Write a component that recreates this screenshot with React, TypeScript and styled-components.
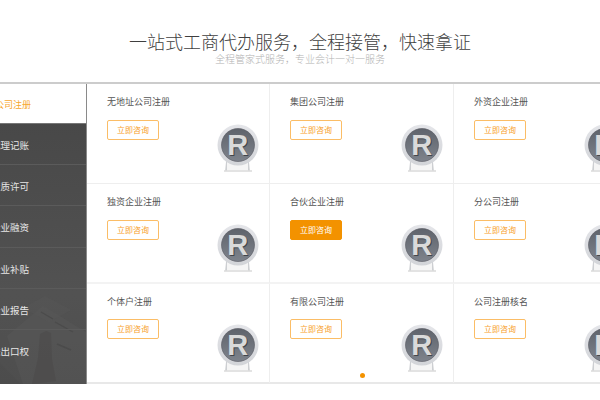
import { createGlobalStyle } from "styled-components";
import styled from "styled-components";

const GlobalStyle = createGlobalStyle`
    html, body {
        margin: 0;
        padding: 0;
        background: #ffffff;
    }
    body {
        font-family: "Noto Sans CJK SC", "Liberation Sans", sans-serif;
    }
`;

const Page = styled.div`
    width: 600px;
    height: 400px;
    overflow: hidden;
    background: #ffffff;
`;

const Intro = styled.div`
    height: 83px;
    padding-top: 31px;
    box-sizing: border-box;
    text-align: center;
    border-bottom: 1px solid #cccccc;
`;

const Title = styled.h2`
    margin: 0;
    font-size: 18px;
    line-height: 20px;
    font-weight: 300;
    color: #3f3f3f;
`;

const Subtitle = styled.p`
    margin: 2px 0 0;
    font-size: 10px;
    line-height: 12px;
    font-weight: 300;
    color: #b2b2b2;
`;

const Panel = styled.div`
    display: flex;
    width: 650px;
    height: 301px;
    margin-left: -7px;
    border-top: 1px solid #cccccc;
    box-sizing: border-box;
`;

const Sidebar = styled.ul`
    position: relative;
    flex: none;
    width: 94px;
    height: 300px;
    margin: 0;
    padding: 0;
    list-style: none;
    background: linear-gradient(#464646, #525252 70%, #4e4e4e);
    border-right: 1px solid #8a8a8a;
    box-sizing: border-box;
    overflow: hidden;
`;

const SideItem = styled.li<{ $active?: boolean }>`
    position: relative;
    height: ${(p) => (p.$active ? "40px" : "41.2px")};
    line-height: ${(p) => (p.$active ? "41px" : "43px")};
    font-size: ${(p) => (p.$active ? "9px" : "9.5px")};
    white-space: nowrap;
    box-sizing: border-box;
    text-indent: ${(p) => (p.$active ? "2px" : "-2px")};
    color: ${(p) => (p.$active ? "#f7a72e" : "#e6e6e6")};
    background: ${(p) => (p.$active ? "#ffffff" : "transparent")};
    border-bottom: 1px solid ${(p) => (p.$active ? "#777777" : "#5b5b5b")};
    &:last-of-type {
        border-bottom: 0;
    }
`;

const SidePhoto = styled.svg`
    position: absolute;
    left: 0;
    bottom: 0;
    width: 93px;
    height: 100px;
`;

const Grid = styled.div`
    position: relative;
    flex: none;
    width: 550px;
    display: grid;
    grid-template-columns: 183px 184px 183px;
    grid-template-rows: 100px 100px 99px;
    border-bottom: 2px solid #e8e8e8;
    box-sizing: border-box;
`;

const CellName = styled.div`
    font-size: 9px;
    line-height: 16px;
    color: #555555;
`;

const Consult = styled.button<{ $filled?: boolean }>`
    display: block;
    width: 52px;
    height: 20px;
    margin-top: 10px;
    padding: 0;
    font-family: inherit;
    font-size: 8px;
    line-height: 18px;
    border-radius: 2px;
    border: 1px solid ${(p) => (p.$filled ? "#f39200" : "#fbbd66")};
    color: ${(p) => (p.$filled ? "#ffffff" : "#f7a02c")};
    background: ${(p) => (p.$filled ? "#f39200" : "#ffffff")};
`;

const Cell = styled.div`
    position: relative;
    padding: 10px 0 0 20px;
    box-sizing: border-box;
    border-right: 1px solid #eeeeee;
    border-bottom: 1px solid #eeeeee;
    &:nth-child(n + 4) {
        border-bottom: 2px solid #f3f3f3;
    }
    &:nth-child(n + 7) {
        border-bottom: 0;
        ${Consult} {
            margin-top: 9px;
        }
    }
`;

const Badge = styled.svg`
    position: absolute;
    right: 9px;
    top: 40px;
    width: 44px;
    height: 48px;
`;

const PageDot = styled.span`
    position: absolute;
    left: 273px;
    bottom: 4px;
    width: 5px;
    height: 5px;
    border-radius: 50%;
    background: #f39200;
`;

const sideItems = ["公司注册", "代理记账", "资质许可", "企业融资", "企业补贴", "企业报告", "进出口权"];

const cells = [
    "无地址公司注册",
    "集团公司注册",
    "外资企业注册",
    "独资企业注册",
    "合伙企业注册",
    "分公司注册",
    "个体户注册",
    "有限公司注册",
    "公司注册核名",
];

const TrademarkBadge = ({ id }: { id: number }): JSX.Element => (
    <Badge viewBox="0 0 44 48">
        <defs>
            <linearGradient id={`ring${id}`} x1="0" y1="0" x2="0" y2="1">
                <stop offset="0" stopColor="#e4e5e9" />
                <stop offset="1" stopColor="#d2d4d8" />
            </linearGradient>
            <linearGradient id={`face${id}`} x1="0" y1="0" x2="0" y2="1">
                <stop offset="0" stopColor="#5f636b" />
                <stop offset="1" stopColor="#7e838c" />
            </linearGradient>
        </defs>
        <path d="M11 37l-1 10M32 37l1 10" stroke="#cdcfd2" strokeWidth="1.8" />
        <path d="M11 38h21v8H11z" fill="#f5f5f5" />
        <path d="M8 47h28" stroke="#dcdcdc" strokeWidth="1.6" />
        <circle cx="22" cy="21" r="20.5" fill={`url(#ring${id})`} />
        <circle cx="22" cy="21" r="16.5" fill={`url(#face${id})`} stroke="#55585f" strokeWidth="0.6" />
        <text
            x="22.8"
            y="32"
            textAnchor="middle"
            fontFamily="'Liberation Sans', sans-serif"
            fontWeight="700"
            fontSize="29"
            fill="#42454b"
        >
            R
        </text>
        <text
            x="21.8"
            y="31"
            textAnchor="middle"
            fontFamily="'Liberation Sans', sans-serif"
            fontWeight="700"
            fontSize="29"
            fill="#dadada"
        >
            R
        </text>
    </Badge>
);

const App = (): JSX.Element => {
    return (
        <Page>
            <GlobalStyle />
            <Intro>
                <Title>一站式工商代办服务，全程接管，快速拿证</Title>
                <Subtitle>全程管家式服务，专业会计一对一服务</Subtitle>
            </Intro>
            <Panel>
                <Sidebar>
                    <SidePhoto viewBox="0 0 93 100">
                        <path d="M14 52L50 22l43 26v52H30z" fill="#5a5a5a" opacity="0.4" />
                        <path d="M30 24l22-12 26 14-22 12z" fill="#585858" opacity="0.4" />
                        <path d="M47 50l6-3 5 2 1 26 4 22-24 3 6-26z" fill="#4a4846" opacity="0.45" />
                        <path d="M62 38l18 10M64 60l14 6M48 28l12 7" stroke="#464646" strokeWidth="1.4" opacity="0.6" />
                        <path d="M0 72l28 28H0z" fill="#484848" opacity="0.3" />
                    </SidePhoto>
                    {sideItems.map((label, i) => (
                        <SideItem key={label} $active={i === 0}>
                            {label}
                        </SideItem>
                    ))}
                </Sidebar>
                <Grid>
                    {cells.map((name, i) => (
                        <Cell key={name}>
                            <CellName>{name}</CellName>
                            <Consult $filled={i === 4}>立即咨询</Consult>
                            <TrademarkBadge id={i} />
                        </Cell>
                    ))}
                    <PageDot />
                </Grid>
            </Panel>
        </Page>
    );
};

export default App;
